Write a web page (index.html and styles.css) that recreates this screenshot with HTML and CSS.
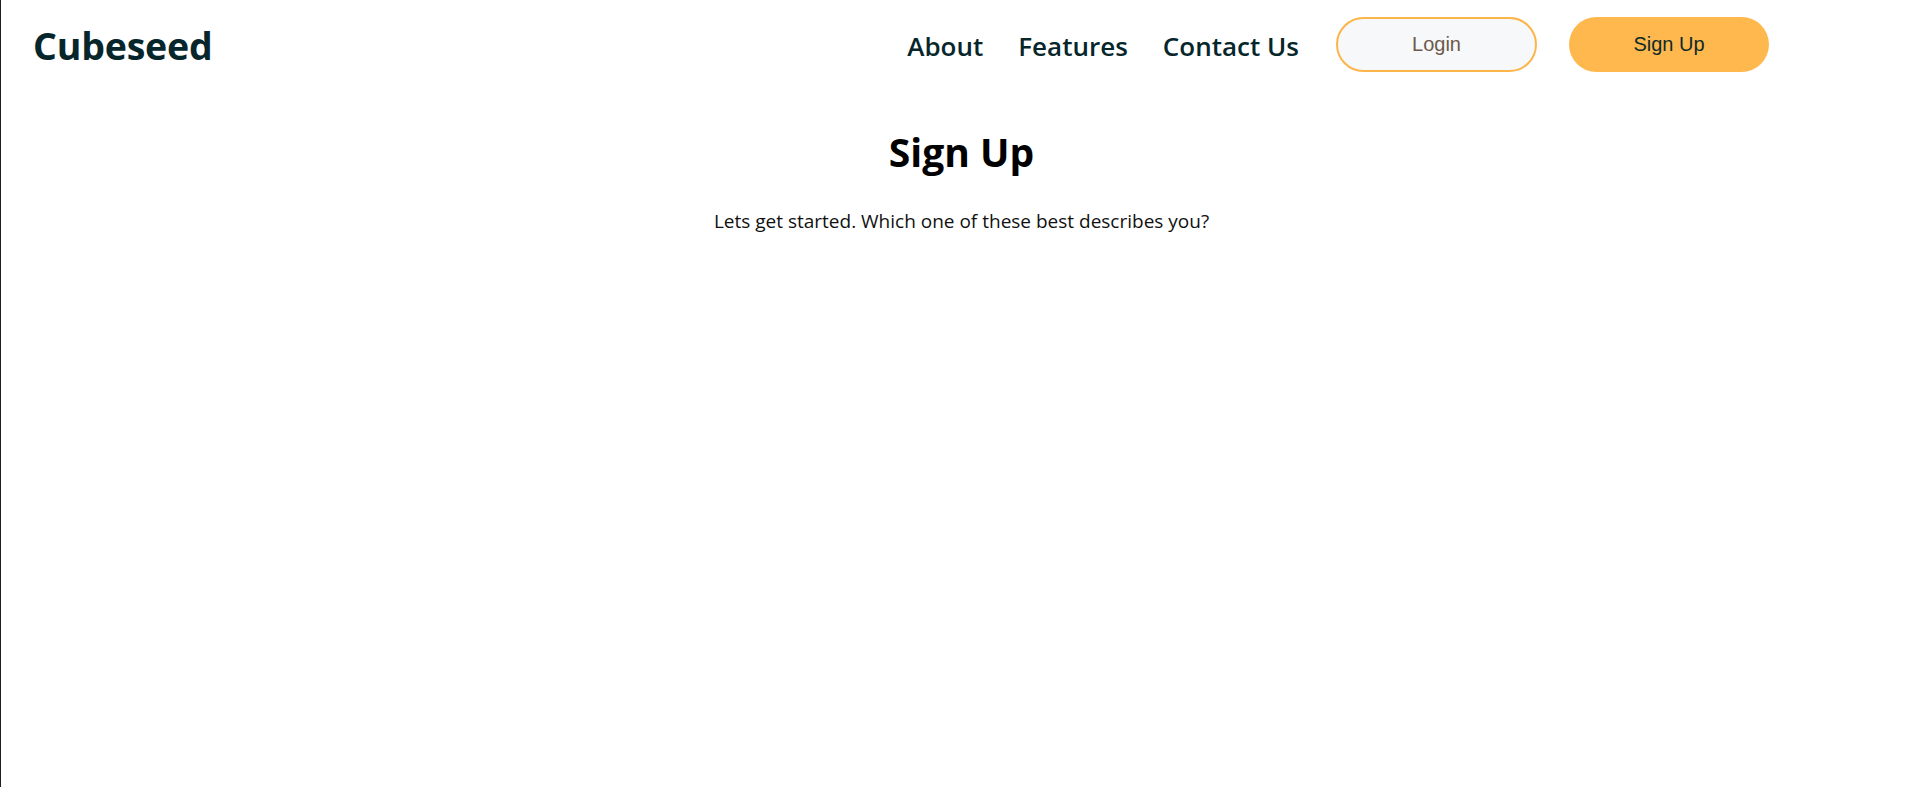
FILE: index.html
```html
<!DOCTYPE html>
<html lang="en">
<head>
<meta charset="utf-8">
<title>Cubeseed - Sign Up</title>
<link rel="stylesheet" href="styles.css">
</head>
<body>
<div class="page">
  <header class="topbar">
    <div class="logo">Cubeseed</div>
    <nav class="nav">
      <a class="nav-link" href="#">About</a>
      <a class="nav-link" href="#">Features</a>
      <a class="nav-link" href="#">Contact Us</a>
      <div class="actions">
        <button class="btn btn-login">Login</button>
        <button class="btn btn-signup">Sign Up</button>
      </div>
    </nav>
  </header>
  <main class="content">
    <h1 class="title">Sign Up</h1>
    <p class="subtitle">Lets get started. Which one of these best describes you?</p>
  </main>
</div>
</body>
</html>
```

FILE: styles.css
```css
html, body {
  margin: 0;
  padding: 0;
  height: 100%;
  background: #ffffff;
}

body {
  font-family: "Open Sans", "Noto Sans", sans-serif;
  color: #000;
}

.page {
  min-height: 100%;
  border-left: 1px solid #1e1e1e;
  box-sizing: border-box;
}

.topbar {
  display: flex;
  align-items: center;
  justify-content: space-between;
  padding: 17px 138px 0 32px;
  height: 55px;
}

.logo {
  font-size: 37.5px;
  font-weight: 700;
  color: #07262b;
  letter-spacing: -0.2px;
  padding-top: 2px;
}

.nav {
  display: flex;
  align-items: center;
  gap: 35px;
}

.nav-link {
  font-size: 26px;
  font-weight: 600;
  color: #07262b;
  text-decoration: none;
  padding-top: 2px;
}

.actions {
  display: flex;
  gap: 32px;
  margin-left: 2px;
}

.btn {
  width: 201px;
  height: 55px;
  border-radius: 28px;
  font-family: "Liberation Sans", Arial, sans-serif;
  font-size: 20px;
  cursor: pointer;
  box-sizing: border-box;
}

.btn-login {
  background: #f6f8fa;
  border: 2px solid #fdb54a;
  color: #6d5a4a;
}

.btn-signup {
  width: 200px;
  background: #feb84d;
  border: none;
  color: #0f2a29;
}

.content {
  padding-left: 15px;
  text-align: center;
}

.title {
  margin: 54px 0 0;
  font-size: 39px;
  font-weight: 700;
  line-height: 1.35;
}

.subtitle {
  margin: 29px 0 0;
  font-size: 19px;
  color: #111;
}
```
